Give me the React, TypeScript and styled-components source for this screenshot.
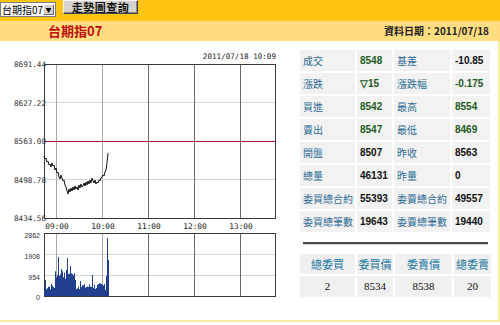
import React from "react";
import styled, { createGlobalStyle } from "styled-components";

const GlobalStyle = createGlobalStyle`
  html, body { margin: 0; padding: 0; background: #fff; }
  body { font-family: "Noto Sans CJK TC", "Liberation Sans", sans-serif; }
`;

const CJK = `"Noto Sans CJK TC", "Liberation Sans", sans-serif`;

// quote data
const quoteRows: [string, string, string, string, boolean, boolean][] = [
  ["成交", "8548", "基差", "-10.85", true, false],
  ["漲跌", "▽15", "漲跌幅", "-0.175", true, true],
  ["買進", "8542", "最高", "8554", true, true],
  ["賣出", "8547", "最低", "8469", true, true],
  ["開盤", "8507", "昨收", "8563", false, false],
  ["總量", "46131", "昨量", "0", false, false],
  ["委買總合約", "55393", "委賣總合約", "49557", false, false],
  ["委買總筆數", "19643", "委賣總筆數", "19440", false, false],
];

const bookHead = ["總委買", "委買價", "委賣價", "總委賣"];
const bookVals = ["2", "8534", "8538", "20"];

// price line, page coordinates
const pricePts: [number, number][] = [
  [44, 156], [45, 159], [46, 158], [47, 162], [48, 161], [49, 165], [50, 164],
  [51, 167], [52, 163], [53, 166], [54, 165], [55, 170], [56, 168], [57, 173],
  [58, 172], [59, 177], [60, 179], [61, 175], [62, 178], [63, 181], [64, 180],
  [65, 185], [66, 187], [67, 191], [68, 194], [69, 189], [70, 192], [71, 188],
  [72, 191], [73, 187], [74, 190], [75, 186], [76, 189], [77, 187], [78, 190],
  [79, 185], [80, 188], [81, 184], [82, 187], [83, 186], [84, 183], [85, 186],
  [86, 182], [87, 185], [88, 181], [89, 184], [90, 180], [91, 183], [92, 178],
  [93, 181], [94, 183], [95, 180], [96, 184], [97, 182], [98, 183], [99, 180],
  [100, 181], [101, 178], [102, 177], [103, 175], [104, 176], [105, 172],
  [106, 170], [107, 163], [108, 153],
];

function volumePath() {
  let seed = 7;
  const rnd = () => {
    seed = (seed * 9301 + 49297) % 233280;
    return seed / 233280;
  };
  const peaks: Record<number, number> = {
    45: 16, 58: 39, 59: 20, 61: 27, 66: 26, 67: 38, 68: 22, 70: 30, 72: 22,
    75: 16, 80: 15, 84: 12, 92: 21, 104: 12, 106: 20, 107: 58, 108: 36,
  };
  let d = "M44 296";
  for (let x = 44; x <= 108; x++) {
    let base = 6 + rnd() * 7;
    if (x > 54 && x < 75) base += 8 + rnd() * 8;
    const h = peaks[x] ?? base;
    d += ` L${x} ${296 - h} L${x + 1} ${296 - h}`;
  }
  d += " L109 296 Z";
  return d;
}

const Page = styled.div`
  width: 500px;
  height: 325px;
  overflow: hidden;
  background: #fff;
`;

const TopBar = styled.div`
  height: 21px;
  background: #ffc312;
  display: flex;
  align-items: flex-start;
  gap: 7px;
`;

const FakeSelect = styled.div`
  margin-top: 2px;
  width: 56px;
  height: 15px;
  box-sizing: border-box;
  border: 1px solid #7a7a7a;
  background: #fff;
  display: flex;
  align-items: center;
  font: 10px/13px ${CJK};
  color: #000;
  padding-left: 1px;
`;

const SelectText = styled.span`
  flex: 1;
  white-space: nowrap;
  overflow: hidden;
`;

const SelectArrow = styled.span`
  width: 11px;
  height: 11px;
  flex: none;
  margin-right: 1px;
  background: #d4d0c8;
  border: 1px solid;
  border-color: #fff #6b6b6b #6b6b6b #fff;
  box-sizing: border-box;
  display: flex;
  align-items: center;
  justify-content: center;
  font-size: 6px;
  line-height: 6px;
  color: #000;
`;

const QueryButton = styled.button`
  width: 75px;
  height: 14px;
  margin: 0;
  padding: 0;
  background: #d6d3ce;
  border: 1px solid;
  border-color: #f4f4f4 #404040 #404040 #f4f4f4;
  box-shadow: inset -1px -1px 0 #888;
  font: 600 11px/12px ${CJK};
  color: #111;
  letter-spacing: 0.5px;
`;

const TitleBar = styled.div`
  height: 20px;
  background: #ffdd80;
  display: flex;
  align-items: center;
  justify-content: space-between;
  padding: 0 11px 0 48px;
`;

const Title = styled.div`
  font: 700 13px/16px ${CJK};
  color: #c00d0d;
`;

const DataDate = styled.div`
  font: 700 10px/14px ${CJK};
  color: #222;
`;

const Content = styled.div`
  height: 281px;
  display: flex;
  border-right: 2px solid #f3eea6;
  border-bottom: 2px solid #f3eea6;
  box-sizing: border-box;
`;

const ChartPane = styled.div`
  width: 296px;
  flex: none;
`;

const InfoPane = styled.div`
  padding: 9px 0 0 4px;
  display: flex;
  flex-direction: column;
`;

const QuoteGrid = styled.div`
  display: grid;
  grid-template-columns: 55px 35px 56px 38px;
  grid-auto-rows: 21px;
  gap: 2px;
`;

const Cell = styled.div<{ $tone?: "label" | "green" | "black" }>`
  background: #f2f2f2;
  display: flex;
  align-items: center;
  padding-left: 3px;
  white-space: nowrap;
  overflow: hidden;
  font: ${(p) =>
    p.$tone === "label"
      ? `400 10px/12px ${CJK}`
      : `700 10px/12px "Liberation Sans", Arial, sans-serif`};
  color: ${(p) =>
    p.$tone === "label" ? "#2f6b95" : p.$tone === "green" ? "#1d5a1d" : "#111"};
`;

const Divider = styled.div`
  margin: 10px 3px 0 3px;
  height: 2px;
  background: #4a4a4a;
  border-bottom: 1px solid #cfcfcf;
`;

const BookGrid = styled.div`
  margin-top: 9px;
  display: grid;
  grid-template-columns: 55px 36px 57px 37px;
  grid-template-rows: 20px 21px;
  gap: 2px;
`;

const BookCell = styled.div<{ $head?: boolean }>`
  background: #f0f0f0;
  display: flex;
  align-items: center;
  justify-content: center;
  font: ${(p) =>
    p.$head
      ? `400 11px/13px ${CJK}`
      : `400 11px/13px "Liberation Serif", "Times New Roman", serif`};
  color: ${(p) => (p.$head ? "#1b77a0" : "#111")};
`;

const Chart = () => {
  const vLines = [56, 102, 148, 194, 240];
  const axisFont = "DejaVu Sans Mono, monospace";
  const priceLabels: [string, number][] = [
    ["8691.44", 64],
    ["8627.22", 102.5],
    ["8563.00", 141],
    ["8498.78", 179.5],
    ["8434.56", 218],
  ];
  const volLabels: [string, number][] = [
    ["2862", 235],
    ["1908", 256],
    ["954", 277],
    ["0", 297],
  ];
  const times = ["09:00", "10:00", "11:00", "12:00", "13:00"];
  return (
    <svg width="296" height="281" viewBox="0 41 296 281">
      <text x="276" y="59" fontFamily={axisFont} fontSize="7.6" textAnchor="end" fill="#222">
        2011/07/18 10:09
      </text>
      {/* price panel */}
      <rect x="44.5" y="64.5" width="231" height="154" fill="#fff" stroke="#3a3a3a" />
      {[102.5, 179.5].map((y) => (
        <line key={y} x1="45" x2="275" y1={y} y2={y} stroke="#d6d6d6" />
      ))}
      {vLines.map((x, i) => (
        <line key={x} x1={x + 0.5} x2={x + 0.5} y1="65" y2="218" stroke={i < 2 ? "#a8a8a8" : "#6a6a6a"} />
      ))}
      <line x1="45" x2="276" y1="141.5" y2="141.5" stroke="#a01530" />
      <polyline
        points={pricePts.map((p) => p.join(",")).join(" ")}
        fill="none"
        stroke="#111"
        strokeWidth="1"
      />
      {priceLabels.map(([t, y]) => (
        <text key={t} x="46" y={y + 3} fontFamily={axisFont} fontSize="7.6" textAnchor="end" fill="#333">
          {t}
        </text>
      ))}
      {times.map((t, i) => (
        <text key={t} x={vLines[i] + 1} y="229" fontFamily={axisFont} fontSize="7.8" textAnchor="middle" fill="#222">
          {t}
        </text>
      ))}
      {/* volume panel */}
      <rect x="44.5" y="233.5" width="231" height="63" fill="#fff" stroke="#3a3a3a" />
      {[254.5, 275.5].map((y) => (
        <line key={y} x1="45" x2="275" y1={y} y2={y} stroke="#d6d6d6" />
      ))}
      {vLines.map((x, i) => (
        <line key={x} x1={x + 0.5} x2={x + 0.5} y1="234" y2="296" stroke={i < 2 ? "#a8a8a8" : "#6a6a6a"} />
      ))}
      <path d={volumePath()} fill="#203f8f" />
      {volLabels.map(([t, y]) => (
        <text key={t} x="40" y={y + 2.5} fontFamily="Liberation Sans, Arial, sans-serif" fontSize="7" textAnchor="end" fill="#333">
          {t}
        </text>
      ))}
    </svg>
  );
};

export default function App() {
  return (
    <Page>
      <GlobalStyle />
      <TopBar>
        <FakeSelect>
          <SelectText>台期指07</SelectText>
          <SelectArrow>▼</SelectArrow>
        </FakeSelect>
        <QueryButton>走勢圖查詢</QueryButton>
      </TopBar>
      <TitleBar>
        <Title>台期指07</Title>
        <DataDate>資料日期：2011/07/18</DataDate>
      </TitleBar>
      <Content>
        <ChartPane>
          <Chart />
        </ChartPane>
        <InfoPane>
          <QuoteGrid>
            {quoteRows.map(([l1, v1, l2, v2, g1, g2]) => (
              <React.Fragment key={l1}>
                <Cell $tone="label">{l1}</Cell>
                <Cell $tone={g1 ? "green" : "black"}>{v1}</Cell>
                <Cell $tone="label">{l2}</Cell>
                <Cell $tone={g2 ? "green" : "black"}>{v2}</Cell>
              </React.Fragment>
            ))}
          </QuoteGrid>
          <Divider />
          <BookGrid>
            {bookHead.map((h) => (
              <BookCell key={h} $head>
                {h}
              </BookCell>
            ))}
            {bookVals.map((v, i) => (
              <BookCell key={i}>{v}</BookCell>
            ))}
          </BookGrid>
        </InfoPane>
      </Content>
    </Page>
  );
}
